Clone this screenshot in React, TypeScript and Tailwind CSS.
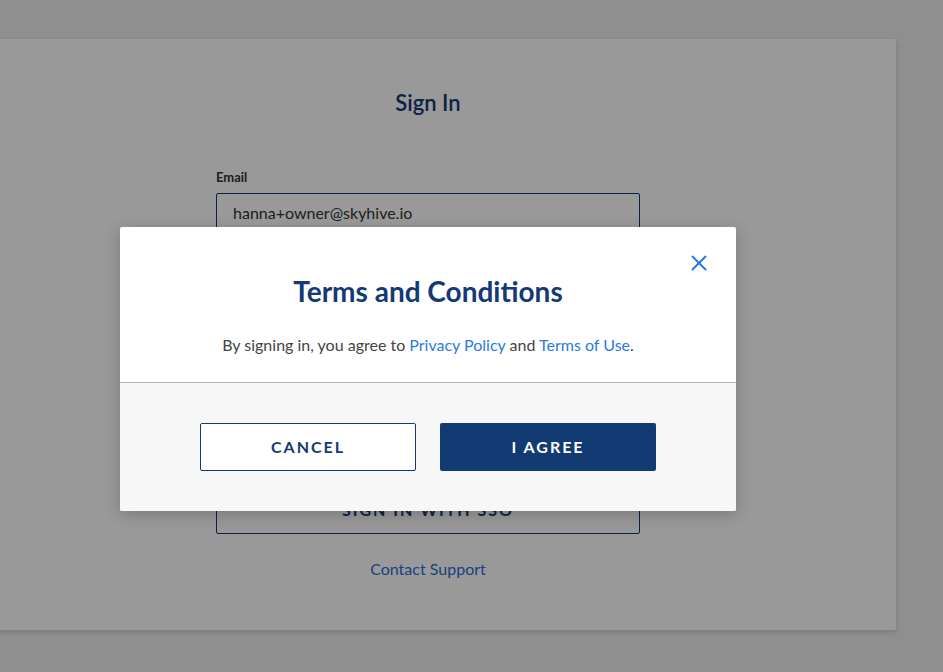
import { X } from 'lucide-react';

function Field({ label, value, type = 'text' }: { label: string; value: string; type?: string }) {
  return (
    <div className="flex flex-col">
      <label className="mb-[5px] text-[13px] font-bold text-[#333]">{label}</label>
      <input
        readOnly
        type={type}
        value={value}
        className="h-[48px] rounded-[2px] border border-[#143a73] px-4 pb-[8px] text-[16px] text-[#333] outline-none"
      />
    </div>
  );
}

export default function App() {
  return (
    <div className="relative h-[672px] w-[943px] overflow-hidden bg-[#eeeeee] font-['Lato','Liberation_Sans',sans-serif]">
      <div className="ml-[-40px] mt-[39px] flex h-[591px] w-[936px] flex-col items-center bg-white shadow-[0_2px_6px_rgba(0,0,0,0.15)]">
        <h1 className="mt-[47px] text-[22px] font-semibold text-[#143a73]">Sign In</h1>
        <div className="mt-[49px] flex w-[424px] flex-col">
          <Field label="Email" value="hanna+owner@skyhive.io" />
          <div className="mt-6">
            <Field label="Password" value="password" type="password" />
          </div>
          <button className="mt-8 h-[48px] rounded-[2px] bg-[#143a73] text-[16px] font-bold tracking-[2px] text-white">
            SIGN IN
          </button>
          <div className="my-[24px] text-center text-[14px] text-[#666]">or</div>
          <button className="h-[48px] rounded-[2px] border border-[#143a73] bg-white text-[16px] font-bold tracking-[2px] text-[#143a73]">
            SIGN IN WITH SSO
          </button>
          <a className="mt-[23px] text-center text-[16px] text-[#2a6fd6]">Contact Support</a>
        </div>
      </div>

      <div className="absolute inset-0 bg-black/40" />

      <div className="absolute left-[120px] top-[227px] w-[616px] rounded-[2px] bg-white shadow-[0_4px_16px_rgba(0,0,0,0.2)]">
        <button className="absolute right-[24px] top-[23px] text-[#2a7ae2]">
          <X size={26} strokeWidth={1.8} />
        </button>
        <div className="flex h-[156px] flex-col items-center border-b border-[#b3b3b3] pt-[45px]">
          <h2 className="text-[28px] font-bold leading-[38px] text-[#133a74]">Terms and Conditions</h2>
          <p className="mt-[23px] text-[16px] text-[#444]">
            By signing in, you agree to <a className="text-[#2a7ae2]">Privacy Policy</a> and{' '}
            <a className="text-[#2a7ae2]">Terms of Use</a>.
          </p>
        </div>
        <div className="flex h-[128px] items-center justify-center gap-6 rounded-b-[2px] bg-[#f7f7f7]">
          <button className="h-[48px] w-[216px] rounded-[2px] border border-[#143a73] bg-white text-[16px] font-bold tracking-[2px] text-[#143a73]">
            CANCEL
          </button>
          <button className="h-[48px] w-[216px] rounded-[2px] bg-[#123a73] text-[16px] font-bold tracking-[2px] text-white">
            I AGREE
          </button>
        </div>
      </div>
    </div>
  );
}
